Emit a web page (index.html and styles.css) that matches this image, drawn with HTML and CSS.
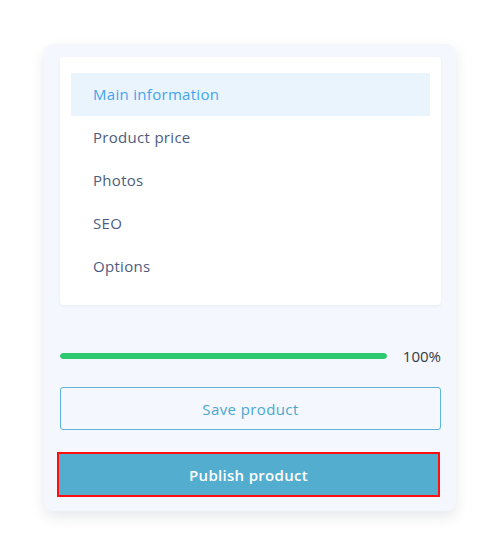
FILE: index.html
```html
<!DOCTYPE html>
<html>
<head>
<meta charset="utf-8">
<link rel="stylesheet" href="styles.css">
</head>
<body>
<div class="card">
  <div class="panel">
    <ul class="menu">
      <li class="item active">Main information</li>
      <li class="item">Product price</li>
      <li class="item">Photos</li>
      <li class="item">SEO</li>
      <li class="item">Options</li>
    </ul>
  </div>
  <div class="progress">
    <div class="track"><div class="fill" style="width:100%"></div></div>
    <span class="pct">100%</span>
  </div>
  <button class="btn save">Save product</button>
  <button class="btn publish">Publish product</button>
</div>
</body>
</html>
```

FILE: styles.css
```css
* { box-sizing: border-box; }
html, body { margin: 0; padding: 0; background: #ffffff; }
body {
  font-family: "Open Sans", "Noto Sans", sans-serif;
  width: 500px;
  height: 555px;
  padding: 44px 0 0 44px;
}
.card {
  width: 412px;
  height: 467px;
  background: #f4f7fd;
  border-radius: 9px;
  box-shadow: 0 6px 14px rgba(30, 40, 60, 0.10);
  padding: 13px 15px 0 16px;
  display: flex;
  flex-direction: column;
}
.panel {
  background: #ffffff;
  border-radius: 4px;
  box-shadow: 0 1px 3px rgba(40, 60, 100, 0.06);
  padding: 16px 11px 17px 11px;
}
.menu { list-style: none; margin: 0; padding: 0; }
.item {
  height: 43px;
  display: flex;
  align-items: center;
  padding-left: 22px;
  padding-bottom: 1px;
  font-size: 15px;
  color: #4d5c7c;
  letter-spacing: 0.3px;
}
.item.active {
  background: #eaf4fd;
  color: #44a4ee;
}
.progress {
  display: flex;
  align-items: center;
  margin-top: 41px;
  height: 20px;
}
.track {
  width: 327px;
  height: 6px;
  border-radius: 3px;
  background: #e3e8f0;
  overflow: hidden;
}
.fill { height: 100%; background: #2ec96f; border-radius: 3px; }
.pct {
  margin-left: 16px;
  font-size: 15px;
  color: #333a44;
}
.btn {
  font-family: inherit;
  font-size: 15px;
  cursor: pointer;
}
.save {
  margin-top: 21px;
  width: 381px;
  height: 43px;
  background: transparent;
  border: 1px solid #5db5d9;
  border-radius: 3px;
  color: #4aa8cf;
  letter-spacing: 0.4px;
}
.publish {
  margin-top: 24px;
  margin-left: -1px;
  width: 379px;
  height: 41px;
  background: #52adcf;
  border: none;
  outline: 2px solid #ff1010;
  color: #ffffff;
  font-weight: 600;
  letter-spacing: 0.3px;
}
```
